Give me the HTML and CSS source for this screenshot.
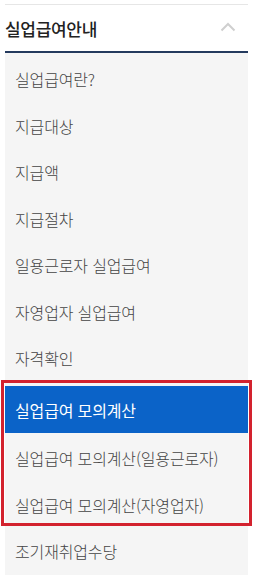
FILE: index.html
```html
<!doctype html>
<html lang="ko">
<head>
<meta charset="UTF-8">
<title>실업급여안내</title>
<link rel="stylesheet" href="styles.css">
</head>
<body>
	<div class="snb">
		<div class="snb-head">
			<h2>실업급여안내</h2>
			<svg class="arrow" width="16" height="10" viewBox="0 0 16 10"><path d="M1.5 8.5 L8 2 L14.5 8.5" fill="none" stroke="#cfcfcf" stroke-width="2"/></svg>
		</div>
		<ul class="snb-list">
			<li><a href="#">실업급여란?</a></li>
			<li><a href="#">지급대상</a></li>
			<li><a href="#">지급액</a></li>
			<li><a href="#">지급절차</a></li>
			<li><a href="#">일용근로자 실업급여</a></li>
			<li><a href="#">자영업자 실업급여</a></li>
			<li><a href="#">자격확인</a></li>
		</ul>
		<ul class="snb-list calc">
			<li class="on"><a href="#">실업급여 모의계산</a></li>
			<li><a href="#">실업급여 모의계산(일용근로자)</a></li>
			<li><a href="#">실업급여 모의계산(자영업자)</a></li>
		</ul>
		<ul class="snb-list">
			<li><a href="#">조기재취업수당</a></li>
		</ul>
	</div>
</body>
</html>
```

FILE: styles.css
```css
* {margin:0;padding:0;}
body{font-family:"Noto Sans CJK KR","Noto Sans",sans-serif;background:#fff;}
ul,li{list-style:none;}
a{text-decoration:none;}
.snb{margin:4px 7px 0 5px;border-top:1px solid #e6e6e6;}
.snb-head{height:46px;display:flex;align-items:center;justify-content:space-between;border-bottom:2px solid #243a5e;}
.snb-head h2{font-size:17px;font-weight:500;color:#222;letter-spacing:-0.3px;}
.snb-head .arrow{margin-right:12px;margin-top:-2px;}
.snb-list{background:#f5f5f5;}
.snb-list:first-of-type{padding-top:3px;}
.snb-list li{height:46.5px;display:flex;align-items:center;}
.snb-list li a{padding-left:10px;font-size:16px;font-weight:300;color:#444;letter-spacing:-0.15px;}
.snb-list.calc{position:relative;padding-top:4.5px;}
.snb-list.calc li.on{height:47px;background:#0b63c8;margin-bottom:2px;}
.snb-list.calc li.on a{color:#fff;font-weight:400;}
.snb-list.calc::after{content:"";position:absolute;top:-2px;left:-4px;right:-4px;bottom:2px;border:3px solid #d3222e;}
```
